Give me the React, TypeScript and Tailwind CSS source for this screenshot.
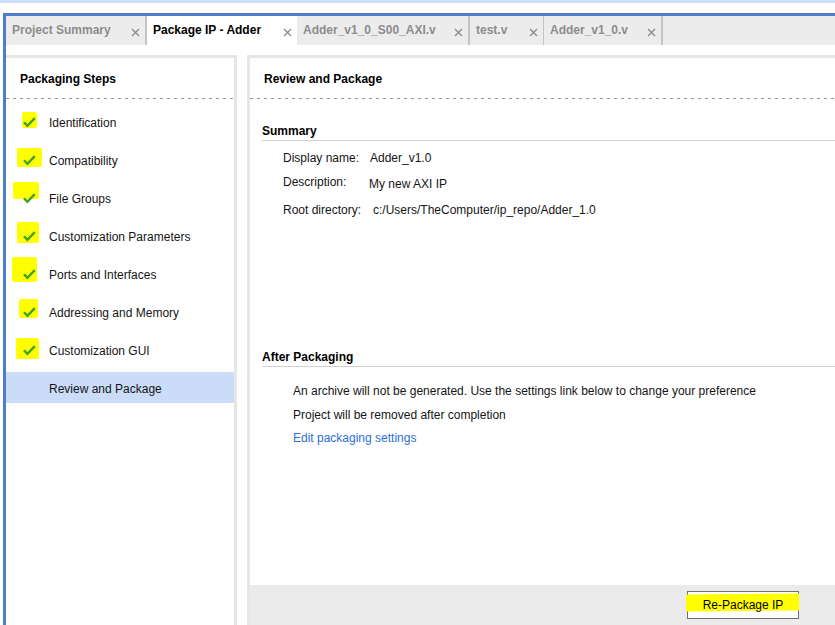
import React from "react";

type Tab = { label: string; w: string; active?: boolean; sep: string };

const tabs: Tab[] = [
  { label: "Project Summary", w: "w-[139px]", sep: "w-[2px]" },
  { label: "Package IP - Adder", w: "w-[150px]", active: true, sep: "w-0" },
  { label: "Adder_v1_0_S00_AXI.v", w: "w-[171px]", sep: "w-[2px]" },
  { label: "test.v", w: "w-[73px]", sep: "w-[1px]" },
  { label: "Adder_v1_0.v", w: "w-[117px]", sep: "w-[2px]" },
];

type Step = { label: string; mark?: string; selected?: boolean };

// hand-drawn highlighter marks behind each check
const steps: Step[] = [
  { label: "Identification", mark: "left-[16px] top-[6px] w-[15px] h-[16px]" },
  { label: "Compatibility", mark: "left-[11px] top-[4px] w-[25px] h-[19px]" },
  { label: "File Groups", mark: "left-[7px] top-[0px] w-[26px] h-[17px]" },
  { label: "Customization Parameters", mark: "left-[11px] top-[2px] w-[22px] h-[21px]" },
  { label: "Ports and Interfaces", mark: "left-[6px] top-[-1px] w-[25px] h-[25px]" },
  { label: "Addressing and Memory", mark: "left-[13px] top-[3px] w-[19px] h-[19px]" },
  { label: "Customization GUI", mark: "left-[10px] top-[4px] w-[23px] h-[21px]" },
  { label: "Review and Package", selected: true },
];

function CloseX() {
  return (
    <svg width="9" height="9" viewBox="0 0 9 9" className="mt-[4px] shrink-0">
      <path d="M1 1L8 8M8 1L1 8" stroke="#8a8a8a" strokeWidth="1.3" />
    </svg>
  );
}

function Check() {
  return (
    <svg
      width="13"
      height="11"
      viewBox="0 0 13 11"
      className="absolute left-[17px] top-[11px]"
    >
      <path
        d="M1 5.2L4.4 8.8L11.8 1.2"
        fill="none"
        stroke="#3fa321"
        strokeWidth="2.4"
      />
    </svg>
  );
}

function Dashed() {
  return (
    <div className="h-[1px] w-full shrink-0 bg-[linear-gradient(to_right,#9a9a9a_3px,transparent_3px)] bg-[length:7px_1px]" />
  );
}

export default function App() {
  return (
    <div className="flex h-[625px] w-[835px] flex-col overflow-hidden bg-white font-['Liberation_Sans',Arial,sans-serif] text-[12px] text-[#151515]">
      <div className="h-[3px] shrink-0 bg-[#cde0f8]" />
      <div className="h-[10px] shrink-0" />

      <div className="ml-[3px] flex min-h-0 flex-1 flex-col border-l-[3px] border-t-[3px] border-[#4d7dcc]">
        {/* editor tabs */}
        <div className="flex h-[29px] shrink-0 bg-[#ececec]">
          {tabs.map((t) => (
            <React.Fragment key={t.label}>
              <div
                className={`flex h-full ${t.w} items-center justify-between pl-[6px] pr-[5px] font-bold ${
                  t.active ? "bg-white text-black" : "text-[#8c8c8c]"
                }`}
              >
                <span className="mb-[1px]">{t.label}</span>
                <CloseX />
              </div>
              <div className={`h-full ${t.sep} bg-[#c4c4c4]`} />
            </React.Fragment>
          ))}
        </div>

        <div className="h-[10px] shrink-0" />

        <div className="flex min-h-0 flex-1">
          {/* left: packaging steps */}
          <div className="flex w-[231px] shrink-0 flex-col border-r-[3px] border-t-[3px] border-[#e6e6e6]">
            <div className="flex h-[40px] items-center pl-[14px] pt-[2px] font-bold text-black">
              Packaging Steps
            </div>
            <Dashed />
            <div className="flex flex-col gap-[7px] pt-[7px]">
              {steps.map((s) => (
                <div
                  key={s.label}
                  className={`relative flex h-[31px] items-center pl-[43px] pt-[2px] ${
                    s.selected ? "bg-[#cbdcf8]" : ""
                  }`}
                >
                  {s.mark && (
                    <>
                      <div className={`absolute ${s.mark} rounded-[2px] bg-[#ffff00]`} />
                      <Check />
                    </>
                  )}
                  <span className="relative">{s.label}</span>
                </div>
              ))}
            </div>
          </div>

          <div className="w-[10px] shrink-0" />

          {/* right: review and package */}
          <div className="flex min-w-0 flex-1 flex-col border-l-[3px] border-t-[3px] border-[#e6e6e6]">
            <div className="flex h-[40px] shrink-0 items-center pl-[14px] pt-[2px] font-bold text-black">
              Review and Package
            </div>
            <Dashed />

            <div className="flex-1 pl-[12px]">
              <div className="mt-[24px] border-b border-[#d2d2d2] pb-[1px] font-bold leading-[16px] text-black">
                Summary
              </div>
              <div className="pl-[21px] leading-[16px]">
                <div className="mt-[9px] flex">
                  <span className="w-[87px]">Display name:</span>
                  <span>Adder_v1.0</span>
                </div>
                <div className="mt-[8px] flex">
                  <span className="w-[87px]">Description:</span>
                  <span className="ml-[-1px] mt-[2px]">My new AXI IP</span>
                </div>
                <div className="mt-[10px] flex">
                  <span className="w-[87px]">Root directory:</span>
                  <span className="ml-[3px]">c:/Users/TheComputer/ip_repo/Adder_1.0</span>
                </div>
              </div>

              <div className="mt-[131px] border-b border-[#d2d2d2] pb-[1px] font-bold leading-[16px] text-black">
                After Packaging
              </div>
              <div className="pl-[31px] leading-[16px]">
                <div className="mt-[16px]">
                  An archive will not be generated. Use the settings link below to change your preference
                </div>
                <div className="mt-[8px]">Project will be removed after completion</div>
                <div className="mt-[7px] text-[#2d6fdc]">Edit packaging settings</div>
              </div>
            </div>

            <div className="flex h-[40px] shrink-0 justify-end bg-[#ebebeb] pr-[36px] pt-[6px]">
              <div className="relative flex h-[28px] w-[112px] items-center justify-center border border-[#707070] bg-white">
                <div className="absolute left-[-2px] right-[-1px] top-[2px] h-[17px] -rotate-[0.6deg] bg-[#ffff00]" />
                <span className="relative text-black">Re-Package IP</span>
              </div>
            </div>
          </div>
        </div>
      </div>
    </div>
  );
}
